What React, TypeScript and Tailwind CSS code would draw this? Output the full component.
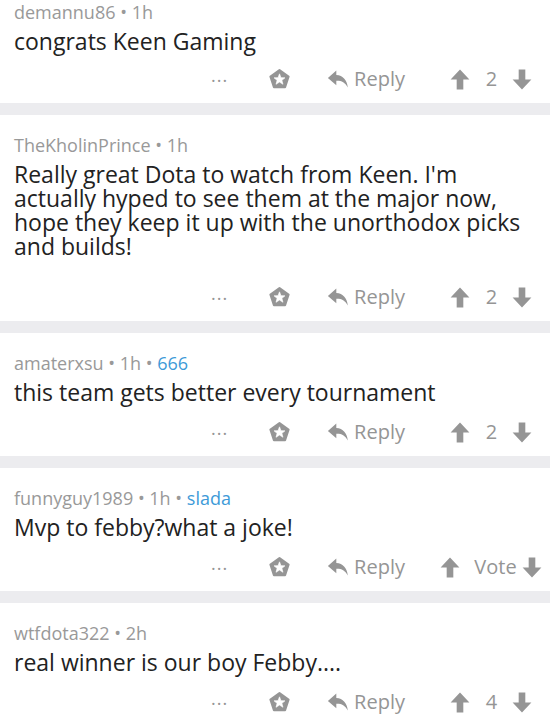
const comments = [
  { user: "demannu86", time: "1h", flair: "", body: "congrats Keen Gaming", score: "2", first: true },
  {
    user: "TheKholinPrince",
    time: "1h",
    flair: "",
    body: "Really great Dota to watch from Keen. I'm actually hyped to see them at the major now, hope they keep it up with the unorthodox picks and builds!",
    score: "2",
    tall: true,
  },
  { user: "amaterxsu", time: "1h", flair: "666", body: "this team gets better every tournament", score: "2" },
  { user: "funnyguy1989", time: "1h", flair: "slada", body: "Mvp to febby?what a joke!", score: "Vote" },
  { user: "wtfdota322", time: "2h", flair: "", body: "real winner is our boy Febby....", score: "4" },
];

const Gild = () => (
  <svg width="21" height="20" viewBox="0 0 20 19">
    <path
      d="M10 1 L18.6 7.2 L15.3 17.2 L4.7 17.2 L1.4 7.2 Z"
      fill="#959595"
      stroke="#959595"
      strokeWidth="2"
      strokeLinejoin="round"
    />
    <path
      d="M10 4.6 L11.4 8.2 L15.2 8.4 L12.3 10.8 L13.3 14.5 L10 12.4 L6.7 14.5 L7.7 10.8 L4.8 8.4 L8.6 8.2 Z"
      fill="#fff"
      stroke="#fff"
      strokeWidth="0.6"
      strokeLinejoin="round"
    />
  </svg>
);

const ReplyIcon = () => (
  <svg width="22" height="18" viewBox="0 0 19 16">
    <path d="M8 0.5 L0.5 7 L8 13.5 L8 9.5 C12.5 9.3 15.6 10.8 18.2 15.5 C17.6 9 14 4.8 8 4.4 Z" fill="#959595" />
  </svg>
);

const ArrowUp = () => (
  <svg width="20" height="21" viewBox="0 0 18 19">
    <path d="M9 0.5 L17.5 9.5 L12 9.5 L12 18.5 L6 18.5 L6 9.5 L0.5 9.5 Z" fill="#959595" />
  </svg>
);

const ArrowDown = () => (
  <svg width="20" height="21" viewBox="0 0 18 19">
    <path d="M9 18.5 L17.5 9.5 L12 9.5 L12 0.5 L6 0.5 L6 9.5 L0.5 9.5 Z" fill="#959595" />
  </svg>
);

export default function App() {
  return (
    <div className="w-[550px] h-[718px] overflow-hidden bg-white font-['Open_Sans',sans-serif]">
      {comments.map((c, i) => (
        <div key={i}>
          {i > 0 && <div className="h-[12px] bg-[#ececef]" />}
          <div className={`pl-[14px] pr-[3px] ${c.first ? "pt-0" : "pt-[18px]"} pb-[12px]`}>
            <div className="text-[18px] leading-[24px] text-[#999999]">
              {c.user} • {c.time}
              {c.flair && (
                <>
                  {" • "}
                  <span className="text-[#3d9ad8]">{c.flair}</span>
                </>
              )}
            </div>
            <div className="mt-[5px] pr-[10px] text-[23px] leading-[24px] text-[#222222]">{c.body}</div>
            <div
              className={`${c.tall ? "mt-[27px]" : c.first ? "mt-[14px]" : "mt-[16px]"} h-[24px] flex items-center justify-end text-[#959595]`}
            >
              <span className="text-[18px] leading-none tracking-[1px] -mt-[8px]">...</span>
              <span className="ml-[41px] flex"><Gild /></span>
              <span className="ml-[37px] flex items-center gap-[5px]">
                <ReplyIcon />
                <span className="text-[20px] leading-none">Reply</span>
              </span>
              <span className="ml-[30px] w-[112px] flex items-center justify-center">
                <ArrowUp />
                <span className={`text-[20px] leading-none ${c.score === "Vote" ? "ml-[14px] mr-[5px]" : "ml-[16px] mr-[15px]"}`}>
                  {c.score}
                </span>
                <ArrowDown />
              </span>
            </div>
          </div>
        </div>
      ))}
    </div>
  );
}
